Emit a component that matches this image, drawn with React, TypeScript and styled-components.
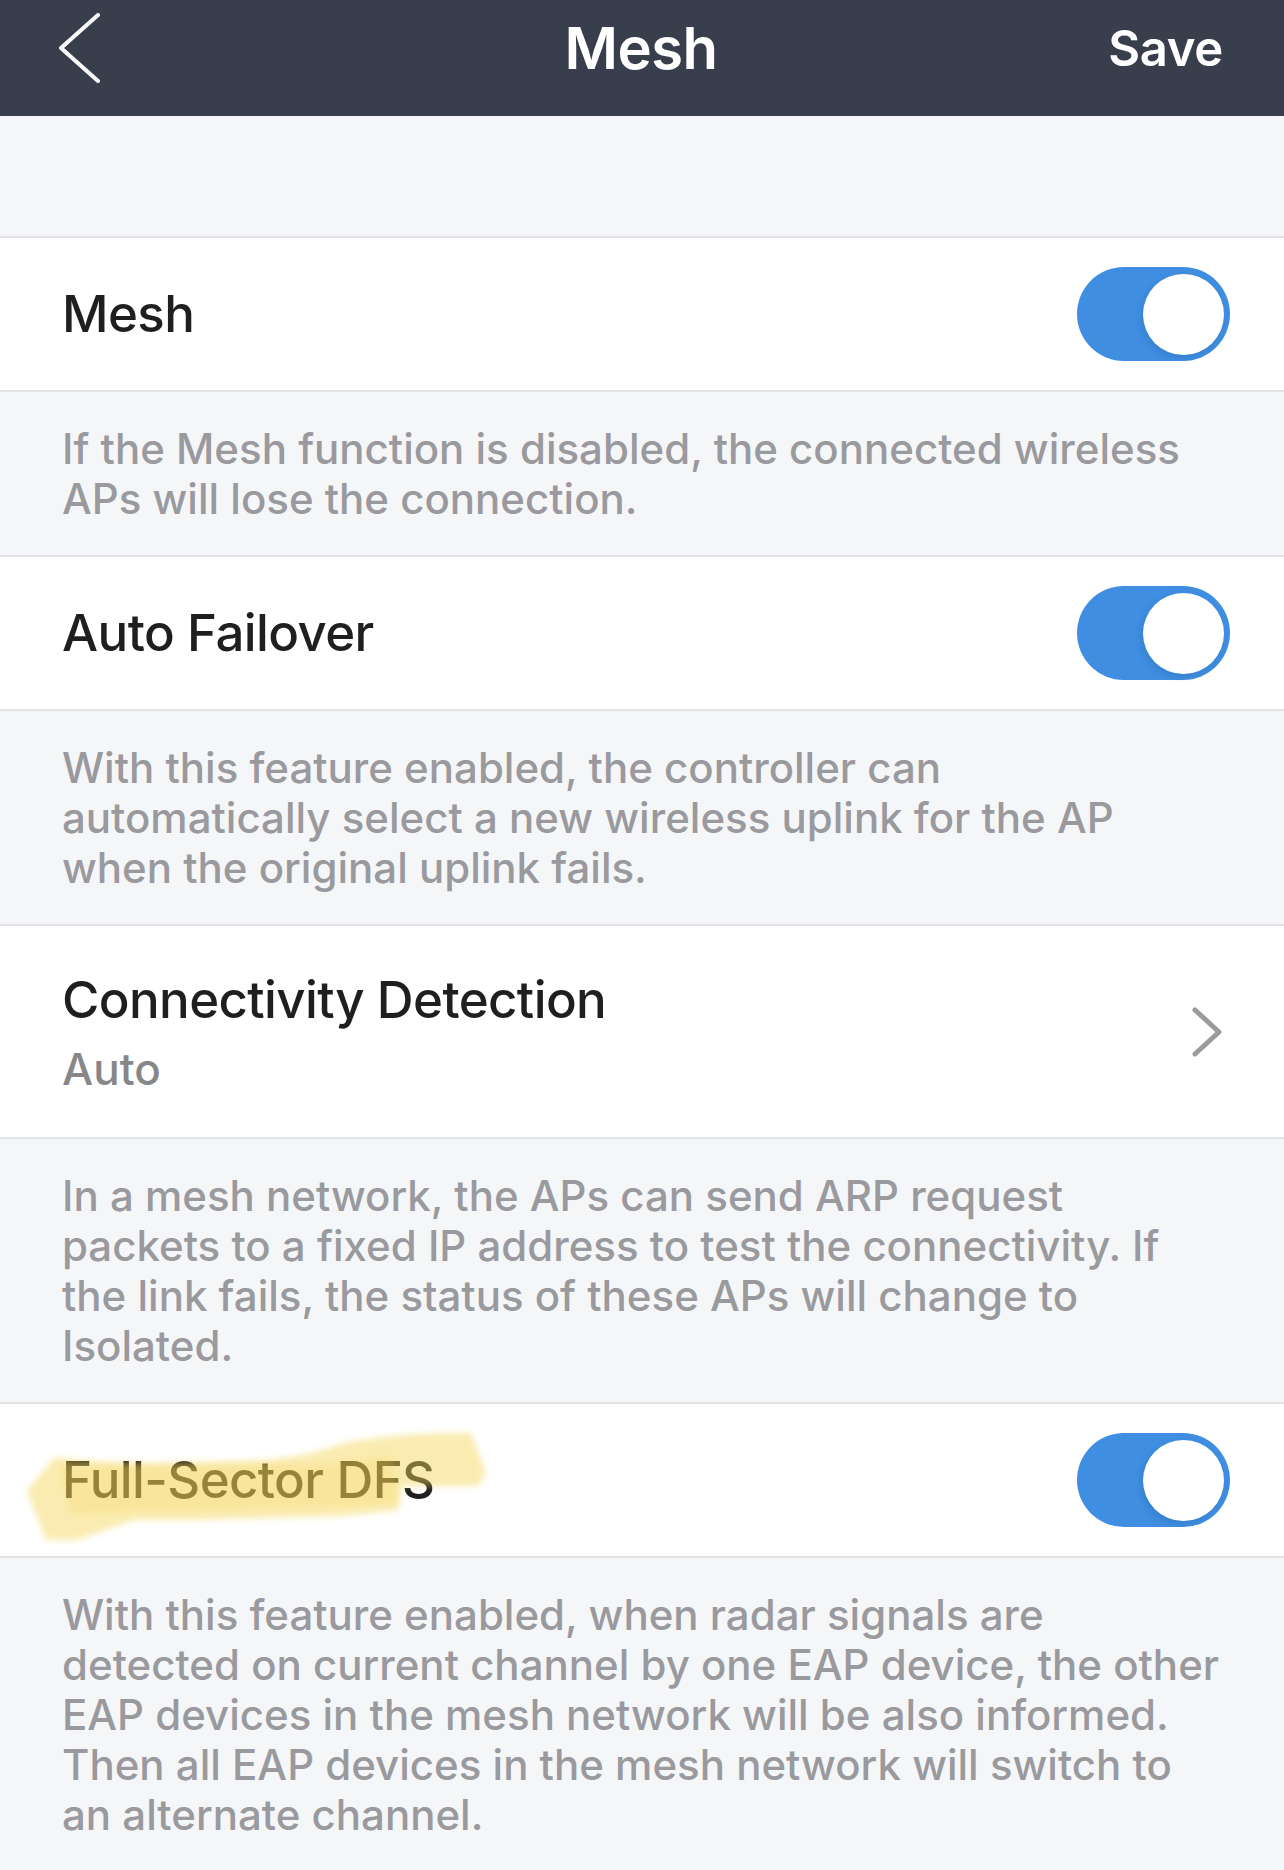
import React from "react";
import styled, { createGlobalStyle } from "styled-components";

const GlobalStyle = createGlobalStyle`
  html, body {
    margin: 0;
    padding: 0;
    background: #f5f6f8;
  }
  body {
    font-family: Inter, "Noto Sans", "Liberation Sans", sans-serif;
    -webkit-font-smoothing: antialiased;
  }
`;

const Page = styled.div`
  width: 1284px;
  min-height: 1870px;
  display: flex;
  flex-direction: column;
  background: #f5f6f8;
`;

const NavBar = styled.header`
  height: 116px;
  box-sizing: border-box;
  padding: 0 61px 20px 59px;
  background: #383e4c;
  display: grid;
  grid-template-columns: 1fr auto 1fr;
  align-items: center;
  color: #ffffff;
`;

const BackButton = styled.button`
  justify-self: start;
  background: none;
  border: 0;
  padding: 0;
  display: flex;
  cursor: pointer;
`;

const NavTitle = styled.h1`
  margin: 0;
  font-size: 58px;
  font-weight: 600;
  letter-spacing: -0.5px;
`;

const SaveButton = styled.button`
  justify-self: end;
  background: none;
  border: 0;
  padding: 0;
  color: #ffffff;
  font-family: inherit;
  font-size: 49px;
  font-weight: 600;
  letter-spacing: -0.3px;
  cursor: pointer;
`;

const TopGap = styled.div`
  height: 120px;
  border-bottom: 2px solid #e2e3e7;
`;

const Row = styled.div<{ $tall?: boolean }>`
  position: relative;
  height: ${(p) => (p.$tall ? 211 : 152)}px;
  box-sizing: content-box;
  padding: 0 54px 0 62px;
  background: #ffffff;
  border-bottom: 2px solid #e2e3e7;
  display: flex;
  align-items: center;
  justify-content: space-between;
`;

const LabelBox = styled.div`
  display: flex;
  flex-direction: column;
  gap: 10px;
`;

const Label = styled.div`
  font-size: 51px;
  line-height: 64px;
  font-weight: 500;
  color: #1f1f21;
  letter-spacing: -0.6px;
`;

const SubValue = styled.div`
  font-size: 44px;
  line-height: 54px;
  font-weight: 500;
  color: #87878a;
`;

const Note = styled.p<{ $last?: boolean }>`
  margin: 0;
  padding: 32px 10px 31px 62px;
  border-bottom: ${(p) => (p.$last ? "0" : "2px solid #e2e3e7")};
  flex: ${(p) => (p.$last ? 1 : "none")};
  font-size: 42px;
  line-height: 50px;
  font-weight: 500;
  color: #9a9a9e;
  white-space: nowrap;
`;

const Track = styled.div<{ $on: boolean }>`
  width: 153px;
  height: 94px;
  border-radius: 47px;
  background: ${(p) => (p.$on ? "#3f8ee1" : "#e3e3e6")};
  display: flex;
  align-items: center;
  justify-content: ${(p) => (p.$on ? "flex-end" : "flex-start")};
  padding: 0 6px;
  box-sizing: border-box;
`;

const Knob = styled.div`
  width: 81px;
  height: 81px;
  border-radius: 50%;
  background: #ffffff;
  box-shadow: -2px 3px 6px rgba(20, 60, 120, 0.18);
`;

const Chevron = styled.svg`
  margin-right: 8px;
`;

const Highlight = styled.svg`
  position: absolute;
  left: 0;
  top: 0;
  pointer-events: none;
`;

const Toggle = ({ on }: { on: boolean }) => (
  <Track $on={on}>
    <Knob />
  </Track>
);

export default function App() {
  return (
    <>
      <GlobalStyle />
      <Page>
        <NavBar>
          <BackButton aria-label="Back">
            <svg width="42" height="70" viewBox="0 0 42 70">
              <polyline
                points="39,2 2,35 39,68"
                fill="none"
                stroke="#ffffff"
                strokeWidth="4"
                strokeLinecap="round"
                strokeLinejoin="round"
              />
            </svg>
          </BackButton>
          <NavTitle>Mesh</NavTitle>
          <SaveButton>Save</SaveButton>
        </NavBar>

        <TopGap />

        <Row>
          <Label>Mesh</Label>
          <Toggle on />
        </Row>
        <Note>
          If the Mesh function is disabled, the connected wireless
          <br />
          APs will lose the connection.
        </Note>

        <Row>
          <Label>Auto Failover</Label>
          <Toggle on />
        </Row>
        <Note>
          With this feature enabled, the controller can
          <br />
          automatically select a new wireless uplink for the AP
          <br />
          when the original uplink fails.
        </Note>

        <Row $tall>
          <LabelBox>
            <Label>Connectivity Detection</Label>
            <SubValue>Auto</SubValue>
          </LabelBox>
          <Chevron width="30" height="50" viewBox="0 0 30 50">
            <polyline
              points="3,3 27,25 3,47"
              fill="none"
              stroke="#9b9b9e"
              strokeWidth="5"
              strokeLinecap="round"
              strokeLinejoin="round"
            />
          </Chevron>
        </Row>
        <Note>
          In a mesh network, the APs can send ARP request
          <br />
          packets to a fixed IP address to test the connectivity. If
          <br />
          the link fails, the status of these APs will change to
          <br />
          Isolated.
        </Note>

        <Row>
          <Label>Full-Sector DFS</Label>
          <Toggle on />
          <Highlight width="520" height="154" viewBox="0 0 520 154">
            <defs>
              <filter id="soft" x="-10%" y="-10%" width="120%" height="120%">
                <feGaussianBlur stdDeviation="3" />
              </filter>
            </defs>
            <g filter="url(#soft)" fill="rgb(245,210,80)">
              <path
                opacity="0.45"
                d="M27,87 L54,54 Q100,58 153,59 L268,56 Q310,52 344,39 Q400,28 471,29 L486,69 L478,82 L402,82 L398,106 L344,112 L191,116 L134,116 L77,136 L46,136 Z"
              />
              <path
                opacity="0.2"
                d="M60,62 L330,60 L392,52 L400,100 L300,104 L70,110 Z"
              />
            </g>
          </Highlight>
        </Row>
        <Note $last>
          With this feature enabled, when radar signals are
          <br />
          detected on current channel by one EAP device, the other
          <br />
          EAP devices in the mesh network will be also informed.
          <br />
          Then all EAP devices in the mesh network will switch to
          <br />
          an alternate channel.
        </Note>
      </Page>
    </>
  );
}
